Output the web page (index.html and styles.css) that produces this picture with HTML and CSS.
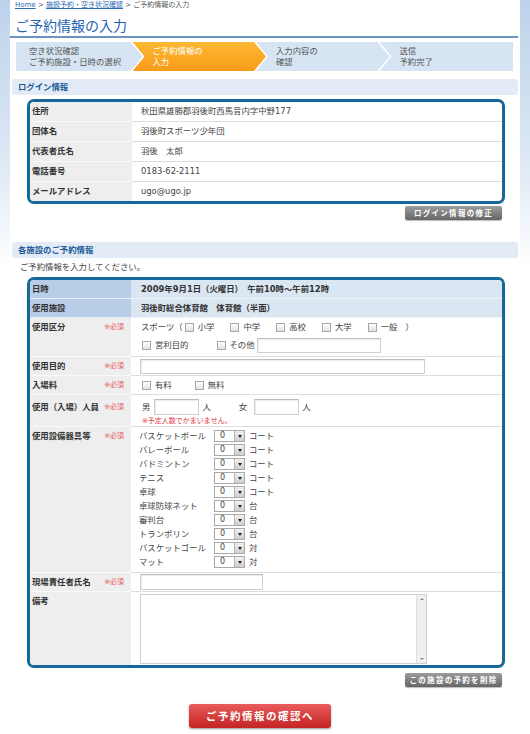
FILE: index.html
```html
<!DOCTYPE html>
<html lang="ja">
<head>
<meta charset="utf-8">
<title>ご予約情報の入力</title>
<link rel="stylesheet" href="styles.css">
</head>
<body>
<div class="page">
  <div class="crumbs"><a href="#">Home</a> &gt; <a href="#">施設予約・空き状況確認</a> &gt; ご予約情報の入力</div>
  <h1 class="title">ご予約情報の入力</h1>
  <ol class="steps">
    <li class="step first">空き状況確認<br>ご予約施設・日時の選択</li>
    <li class="step current">ご予約情報の<br>入力</li>
    <li class="step">入力内容の<br>確認</li>
    <li class="step last">送信<br>予約完了</li>
  </ol>

  <h2 class="sec">ログイン情報</h2>
  <div class="box">
    <table class="info">
      <tr><th>住所</th><td>秋田県雄勝郡羽後町西馬音内字中野177</td></tr>
      <tr><th>団体名</th><td>羽後町スポーツ少年団</td></tr>
      <tr><th>代表者氏名</th><td>羽後　太郎</td></tr>
      <tr><th>電話番号</th><td>0183-62-2111</td></tr>
      <tr><th>メールアドレス</th><td>ugo@ugo.jp</td></tr>
    </table>
  </div>
  <div class="btnrow"><button class="gbtn" type="button">ログイン情報の修正</button></div>

  <h2 class="sec sec2">各施設のご予約情報</h2>
  <p class="intro">ご予約情報を入力してください。</p>
  <div class="box">
    <table class="form">
      <tr class="hl"><th>日時</th><td>2009年9月1日（火曜日）　午前10時～午前12時</td></tr>
      <tr class="hl"><th>使用施設</th><td>羽後町総合体育館　体育館（半面）</td></tr>
      <tr class="r-kubun">
        <th>使用区分<span class="req">※必須</span></th>
        <td>
          <div class="line">スポーツ（<label class="ck c1"><input type="checkbox">小学</label><label class="ck"><input type="checkbox">中学</label><label class="ck"><input type="checkbox">高校</label><label class="ck"><input type="checkbox">大学</label><label class="ck cl"><input type="checkbox">一般</label>）</div>
          <div class="line"><label class="ck c-eiri"><input type="checkbox">営利目的</label><label class="ck c-other"><input type="checkbox">その他</label><input type="text" class="txt t-other"></div>
        </td>
      </tr>
      <tr class="r-mokuteki">
        <th>使用目的<span class="req">※必須</span></th>
        <td><input type="text" class="txt t-purpose"></td>
      </tr>
      <tr>
        <th>入場料<span class="req">※必須</span></th>
        <td><div class="line"><label class="ck c-fee"><input type="checkbox">有料</label><label class="ck"><input type="checkbox">無料</label></div></td>
      </tr>
      <tr class="r-ninzu">
        <th>使用（入場）人員<span class="req">※必須</span></th>
        <td>
          <div class="line">男<input type="text" class="txt t-num">人<span class="fem">女</span><input type="text" class="txt t-num">人</div>
          <div class="note">※予定人数でかまいません。</div>
        </td>
      </tr>
      <tr class="r-equip">
        <th>使用設備器具等<span class="req">※必須</span></th>
        <td>
          <div class="equip">
            <span>バスケットボール</span><span class="sel"><span class="sel-v">0</span><span class="sel-a"></span></span><span>コート</span>
            <span>バレーボール</span><span class="sel"><span class="sel-v">0</span><span class="sel-a"></span></span><span>コート</span>
            <span>バドミントン</span><span class="sel"><span class="sel-v">0</span><span class="sel-a"></span></span><span>コート</span>
            <span>テニス</span><span class="sel"><span class="sel-v">0</span><span class="sel-a"></span></span><span>コート</span>
            <span>卓球</span><span class="sel"><span class="sel-v">0</span><span class="sel-a"></span></span><span>コート</span>
            <span>卓球防球ネット</span><span class="sel"><span class="sel-v">0</span><span class="sel-a"></span></span><span>台</span>
            <span>審判台</span><span class="sel"><span class="sel-v">0</span><span class="sel-a"></span></span><span>台</span>
            <span>トランポリン</span><span class="sel"><span class="sel-v">0</span><span class="sel-a"></span></span><span>台</span>
            <span>バスケットゴール</span><span class="sel"><span class="sel-v">0</span><span class="sel-a"></span></span><span>対</span>
            <span>マット</span><span class="sel"><span class="sel-v">0</span><span class="sel-a"></span></span><span>対</span>
          </div>
        </td>
      </tr>
      <tr class="r-resp">
        <th>現場責任者氏名<span class="req">※必須</span></th>
        <td><div class="line"><input type="text" class="txt t-resp"></div></td>
      </tr>
      <tr class="r-memo">
        <th>備考</th>
        <td><div class="memo"><textarea class="memo-ta"></textarea><span class="sb"><span class="sb-up"></span><span class="sb-dn"></span></span></div></td>
      </tr>
    </table>
  </div>
  <div class="btnrow btnrow2"><button class="gbtn" type="button">この施設の予約を削除</button></div>

  <div class="submit-row"><button class="rbtn" type="button">ご予約情報の確認へ</button></div>
</div>
</body>
</html>
```
FILE: styles.css
```css
* { box-sizing: border-box; }
html, body { margin: 0; padding: 0; }
body {
  font-family: "DejaVu Sans", "Noto Sans CJK JP", sans-serif;
  font-size: 8.4px;
  color: #444;
  background: #fff linear-gradient(to bottom, #bcd2eb 0, #dbe7f4 150px, #fff 270px) no-repeat;
  min-height: 734px;
}
.page {
  margin: 0 10px;
  background: #fff;
  min-height: 734px;
}

/* breadcrumb */
.crumbs {
  font-size: 7px;
  line-height: 10px;
  padding-left: 5px;
  color: #555;
}
.crumbs a { color: #2c6cb4; }

/* title */
.title {
  margin: 6px 2px 0 0;
  padding-left: 5px;
  font-size: 14px;
  line-height: 20px;
  font-weight: normal;
  color: #1f63b2;
  border-bottom: 2px solid #6b93c2;
}

/* steps */
.steps {
  display: flex;
  list-style: none;
  margin: 4px 7px 0 6px;
  padding: 0;
  height: 29px;
}
.step {
  flex: 1;
  background: #d7e4f3;
  color: #555;
  font-size: 8.4px;
  line-height: 11px;
  padding: 4px 0 0 20px;
  margin-left: -10px;
  clip-path: polygon(0 0, calc(100% - 12px) 0, 100% 50%, calc(100% - 12px) 100%, 0 100%, 12px 50%);
  white-space: nowrap;
}
.step.first {
  margin-left: 0;
  padding-left: 13px;
  clip-path: polygon(0 0, calc(100% - 12px) 0, 100% 50%, calc(100% - 12px) 100%, 0 100%);
}
.step.last {
  clip-path: polygon(0 0, 100% 0, 100% 100%, 0 100%, 12px 50%);
}
.step.current {
  background: linear-gradient(#fdb833, #f89c1a);
  color: #fff;
}

/* section headers */
.sec {
  margin: 8px 2px 0;
  height: 16px;
  line-height: 16px;
  padding-left: 6px;
  background: #e2ebf6;
  border-radius: 3px;
  color: #215a98;
  font-size: 8.4px;
  font-weight: bold;
}
.sec2 { margin-top: 22px; }
.intro {
  margin: 0;
  padding-left: 10px;
  line-height: 18px;
  color: #444;
}

/* bordered boxes */
.box {
  margin: 4px 0 0 17px;
  width: 478px;
  border: 3px solid #17689a;
  border-radius: 7px;
  overflow: hidden;
  background: #fff;
}
.intro + .box { margin-top: 1px; }

table { border-collapse: separate; border-spacing: 0; width: 100%; }
th { text-align: left; font-weight: bold; color: #333; }

.info th {
  width: 102px;
  background: #eee;
  padding: 0 0 0 2px;
  line-height: 19px;
  border-bottom: 1px solid #fafafa;
}
.info td {
  padding: 0 0 0 9px;
  line-height: 19px;
  border-bottom: 1px solid #ddd;
}
.info tr:last-child th, .info tr:last-child td { border-bottom: 0; }

/* buttons */
.btnrow {
  display: flex;
  justify-content: flex-end;
  padding-right: 18px;
  margin-top: 2px;
}
.btnrow2 { margin-top: 5px; }
.gbtn {
  width: 97px;
  height: 14px;
  padding: 0;
  border: 0;
  border-radius: 2px;
  background: linear-gradient(#9c9c9c, #666);
  box-shadow: 0 1px 1px #bbb;
  color: #fff;
  font-family: "Noto Sans CJK JP", sans-serif;
  font-size: 7.5px;
  font-weight: bold;
  line-height: 14px;
  letter-spacing: 1.3px;
}
.submit-row {
  display: flex;
  justify-content: center;
  padding-right: 10px;
  margin-top: 17px;
}
.rbtn {
  width: 142px;
  height: 24px;
  padding: 0;
  border: 0;
  border-radius: 3px;
  background: linear-gradient(#e95b5b, #c42424);
  box-shadow: 0 1px 2px #999;
  color: #fff;
  font-family: "Noto Sans CJK JP", sans-serif;
  font-size: 10.5px;
  font-weight: bold;
  line-height: 24px;
  letter-spacing: 1.5px;
}

/* form table */
.form th {
  width: 101px;
  background: #eee;
  padding: 0 0 0 2px;
  line-height: 18px;
  vertical-align: top;
  border-bottom: 1px solid #fafafa;
  white-space: nowrap;
}
.form td {
  padding: 0 0 0 10px;
  line-height: 18px;
  vertical-align: top;
  border-bottom: 1px solid #ddd;
}
.form tr:last-child th, .form tr:last-child td { border-bottom: 0; }
.form .hl th { background: #b8cee6; border-bottom-color: #e8eff8; }
.form .hl td { background: #dbe6f3; font-weight: bold; color: #333; border-bottom-color: #eef3f9; }
.req {
  float: right;
  margin-right: 7px;
  color: #e45a5f;
  font-size: 7px;
  font-weight: normal;
}

.line {
  display: flex;
  align-items: center;
  height: 18px;
  white-space: nowrap;
}
.r-kubun td { padding-bottom: 2px; }
.ck {
  display: inline-flex;
  align-items: center;
  margin-right: 16px;
}
.ck input {
  appearance: none;
  -webkit-appearance: none;
  width: 9px;
  height: 9px;
  margin: 0 4px 0 0;
  border: 1px solid #a8a8a8;
  background: linear-gradient(#fff, #e2e2e2);
}
.ck.c1 { margin-left: 2px; }
.ck.cl { margin-right: 8px; }
.ck.c-eiri { margin-left: 1px; margin-right: 28px; }
.ck.c-other { margin-right: 2px; }
.ck.c-fee { margin-left: 1px; margin-right: 23px; }

.txt {
  display: block;
  height: 16px;
  padding: 0;
  border: 1px solid #cfcfcf;
  border-top-color: #bdbdbd;
  background: #fff;
  box-shadow: inset 1px 1px 1px #ececec;
}
.t-other { width: 124px; height: 15px; }
.t-purpose { width: 285px; height: 15px; margin: 2px 0 0 -1px; }
.r-mokuteki td { height: 18px; }
.t-num { width: 45px; margin: 0 3px 0 4px; }
.fem { margin: 0 3px 0 28px; }
.r-ninzu th, .r-ninzu td { padding-top: 3px; }
.r-ninzu .line { padding-left: 1px; }
.note {
  color: #e0393f;
  font-size: 7px;
  line-height: 10px;
  padding-left: 1px;
}
.t-resp { width: 123px; margin-left: -1px; }

.equip {
  display: grid;
  grid-template-columns: 71px 31px auto;
  column-gap: 4px;
  row-gap: 2px;
  margin-left: -2px;
  padding: 3px 0 4px;
  line-height: 12px;
  white-space: nowrap;
}
.sel {
  display: flex;
  align-items: center;
  justify-content: space-between;
  width: 31px;
  height: 12px;
  border: 1px solid #a9a9a9;
  background: #fff;
}
.sel-v { padding-left: 5px; font-size: 8px; line-height: 10px; }
.sel-a {
  display: flex;
  align-items: center;
  justify-content: center;
  width: 10px;
  height: 10px;
  background: linear-gradient(#f2f2f2, #cfcfcf);
  border-left: 1px solid #b5b5b5;
}
.sel-a::after {
  content: "";
  border-left: 2.5px solid transparent;
  border-right: 2.5px solid transparent;
  border-top: 3px solid #222;
}

.r-memo td { padding-top: 2px; padding-bottom: 1px; }
.memo {
  display: flex;
  width: 287px;
  height: 70px;
  margin-left: -1px;
  border: 1px solid #cfcfcf;
  background: #fff;
}
.memo-ta {
  flex: 1;
  border: 0;
  padding: 0;
  resize: none;
  outline: none;
}
.sb {
  display: flex;
  flex-direction: column;
  justify-content: space-between;
  align-items: center;
  width: 10px;
  padding: 3px 0;
  background: #efefef;
  border-left: 1px solid #e0e0e0;
}
.sb-up { border-left: 2px solid transparent; border-right: 2px solid transparent; border-bottom: 2px solid #888; }
.sb-dn { border-left: 2px solid transparent; border-right: 2px solid transparent; border-top: 2px solid #888; }
```
